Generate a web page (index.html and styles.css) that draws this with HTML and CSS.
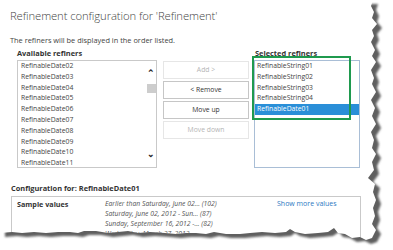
FILE: index.html
```html
<!DOCTYPE html>
<html lang="en">
<head>
	<meta charset="UTF-8">
	<title>Refinement configuration</title>
<link rel="stylesheet" href="styles.css">
</head>
<body>
<div class="page">
	<h1 class="title">Refinement configuration for 'Refinement'</h1>
	<p class="intro">The refiners will be displayed in the order listed.</p>

	<div class="pickers">
		<div class="col avail">
			<div class="label">Available refiners</div>
			<div class="listbox">
				<ul>
					<li>RefinableDate02</li>
					<li>RefinableDate03</li>
					<li>RefinableDate04</li>
					<li>RefinableDate05</li>
					<li>RefinableDate06</li>
					<li>RefinableDate07</li>
					<li>RefinableDate08</li>
					<li>RefinableDate09</li>
					<li>RefinableDate10</li>
					<li>RefinableDate11</li>
				</ul>
				<div class="scroll">
					<span class="arrow">&#8963;</span>
					<span class="thumb"></span>
					<span class="arrow down">&#8964;</span>
				</div>
			</div>
		</div>
		<div class="buttons">
			<div class="btn off">Add &gt;</div>
			<div class="btn">&lt; Remove</div>
			<div class="btn">Move up</div>
			<div class="btn off">Move down</div>
		</div>
		<div class="col selected">
			<div class="label">Selected refiners</div>
			<div class="listbox">
				<ul>
					<li>RefinableString01</li>
					<li>RefinableString02</li>
					<li>RefinableString03</li>
					<li>RefinableString04</li>
					<li class="on">RefinableDate01</li>
				</ul>
			</div>
			<div class="mark"></div>
		</div>
	</div>

	<div class="config">
		<div class="label">Configuration for: RefinableDate01</div>
		<div class="configbox">
			<div class="name">Sample values</div>
			<ul class="values">
				<li>Earlier than Saturday, June 02... <span>(102)</span></li>
				<li>Saturday, June 02, 2012 - Sun... <span>(87)</span></li>
				<li>Sunday, September 16, 2012 -... <span>(82)</span></li>
				<li>Wednesday, March 27, 2013</li>
			</ul>
			<a class="more">Show more values</a>
		</div>
	</div>
</div>

<svg class="tear" width="393" height="250" viewBox="0 0 393 250">
	<defs>
		<clipPath id="outside">
			<path clip-rule="evenodd" d="M0 0H393V250H0Z M0 0L373 0L371 6L374 12L372 18L377 24L372 30L374 36L371 42L375 50L372 56L376 62L371 70L374 78L372 84L376 92L371 100L375 108L372 116L376 124L371 132L374 140L372 148L376 154L372 162L374 170L368 178L375 184L373 192L376 200L373 208L375 216L372 224L376 230L372 238L366 240L360 237L352 238L345 234L338 233L334 228L328 232L318 233L305 234L295 232L290 229L286 232L275 233L262 232L250 233L240 234L226 234L214 232L206 234L196 233L186 233L176 234L165 233L150 232L138 233L128 231L118 232L108 233L96 231L84 231L78 233L70 232L58 232L46 233L34 232L22 233L12 232L0 233Z"/>
		</clipPath>
		<filter id="soft"><feGaussianBlur stdDeviation="1.3"/></filter>
	</defs>
	<path fill="#fff" fill-rule="evenodd" d="M0 0H393V250H0Z M0 0L373 0L371 6L374 12L372 18L377 24L372 30L374 36L371 42L375 50L372 56L376 62L371 70L374 78L372 84L376 92L371 100L375 108L372 116L376 124L371 132L374 140L372 148L376 154L372 162L374 170L368 178L375 184L373 192L376 200L373 208L375 216L372 224L376 230L372 238L366 240L360 237L352 238L345 234L338 233L334 228L328 232L318 233L305 234L295 232L290 229L286 232L275 233L262 232L250 233L240 234L226 234L214 232L206 234L196 233L186 233L176 234L165 233L150 232L138 233L128 231L118 232L108 233L96 231L84 231L78 233L70 232L58 232L46 233L34 232L22 233L12 232L0 233Z"/>
	<g clip-path="url(#outside)">
		<path fill="#5e5e5e" filter="url(#soft)" transform="translate(5 4)" d="M0 0L373 0L371 6L374 12L372 18L377 24L372 30L374 36L371 42L375 50L372 56L376 62L371 70L374 78L372 84L376 92L371 100L375 108L372 116L376 124L371 132L374 140L372 148L376 154L372 162L374 170L368 178L375 184L373 192L376 200L373 208L375 216L372 224L376 230L372 238L366 240L360 237L352 238L345 234L338 233L334 228L328 232L318 233L305 234L295 232L290 229L286 232L275 233L262 232L250 233L240 234L226 234L214 232L206 234L196 233L186 233L176 234L165 233L150 232L138 233L128 231L118 232L108 233L96 231L84 231L78 233L70 232L58 232L46 233L34 232L22 233L12 232L0 233Z"/>
	</g>
</svg>
</body>
</html>
```

FILE: styles.css
```css
body{margin:0;background:#fff;font-family:"Open Sans","Noto Sans",sans-serif;color:#444;}
ul,li{list-style:none;margin:0;padding:0;}
.page{padding:7px 0 0 10px;width:383px;height:243px;overflow:hidden;}
.title{margin:0;font-size:11.3px;font-weight:300;line-height:18px;color:#444;letter-spacing:-0.1px;}
.intro{margin:10px 0 0;font-size:7.4px;line-height:10px;color:#444;}
.label{font-size:7.4px;font-weight:700;line-height:9px;color:#333;height:9px;}

.pickers{display:flex;margin:4px 0 0 7px;}
.col{position:relative;}
.avail{width:140px;}
.listbox{display:flex;margin-top:2px;border:1px solid #c9c9c9;height:106px;background:#fff;}
.listbox ul{flex:1;padding-top:0;}
.listbox li{font-size:6.8px;line-height:10.8px;height:10.8px;padding-left:3px;color:#444;}
.scroll{width:10px;display:flex;flex-direction:column;align-items:center;background:#fff;}
.arrow{font-size:9px;line-height:9px;color:#222;margin-top:7px;font-weight:700;}
.arrow.down{margin-top:auto;margin-bottom:9px;}
.thumb{width:9px;height:9px;background:#cdcdcd;margin-top:7px;}

.buttons{width:86px;margin:12px 0 0 6px;display:flex;flex-direction:column;gap:2px;}
.btn{height:16px;border:1px solid #c6c6c6;font-size:6.8px;line-height:16px;text-align:center;color:#333;}
.btn.off{border-color:#e6e6e6;color:#b5b5b5;}

.selected{width:106px;margin-left:5px;}
.selected .label{padding-left:1px;}
.selected .listbox{border-color:#a9bed6;}
.selected .listbox li{padding-left:2px;}
.selected li.on{background:#2a8fd8;color:#fff;}
.mark{position:absolute;left:-2px;top:7px;width:95px;height:60px;border:2px solid #1f9a4e;}

.config{margin:16px 0 0 1px;}
.configbox{display:flex;margin-top:3px;border:1px solid #c9c9c9;width:350px;height:60px;padding:2px 0 0 5px;box-sizing:border-box;}
.name{width:88px;font-size:7.2px;font-weight:700;color:#333;line-height:10px;}
.values{width:172px;}
.values li{font-size:6.8px;font-style:italic;line-height:10px;color:#555;white-space:nowrap;}
.more{font-size:7px;color:#2b79c2;line-height:10px;}

.tear{position:absolute;left:0;top:0;}
```
